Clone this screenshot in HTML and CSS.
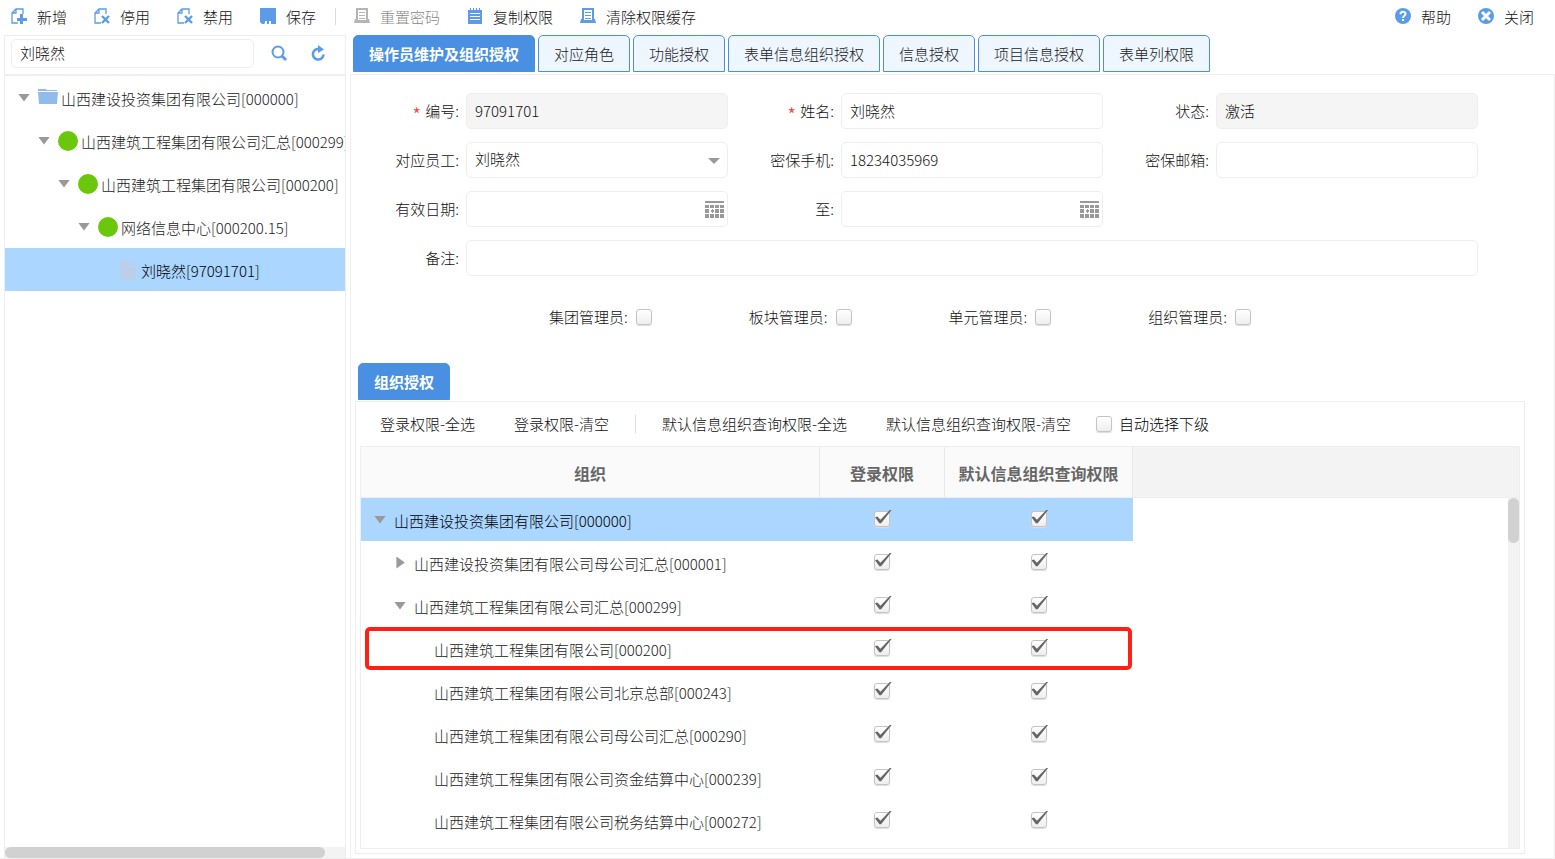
FILE: index.html
```html
<!DOCTYPE html>
<html lang="zh-CN">
<head>
<meta charset="utf-8">
<title>操作员维护及组织授权</title>
<link rel="stylesheet" href="styles.css">
</head>
<body>
<svg class="defs" aria-hidden="true">
  <symbol id="i-folder" viewBox="0 0 20 16"><path fill="#8fbcec" d="M0 1h8l1 1h10v1H0z"/><path fill="#8fbcec" d="M0 4h20l-1 12H1z"/></symbol>
  <symbol id="i-file" viewBox="0 0 16 20"><path fill="#bccfe8" d="M0 0h9v7h7v13H0z"/><path fill="#bccfe8" d="M10 0l6 6h-6z"/></symbol>
  <symbol id="i-print" viewBox="0 0 16 16"><path fill="none" stroke="currentColor" stroke-width="2" d="M3 12V1h10v11"/><path fill="currentColor" d="M5 4h6v1H5zM5 7h6v1H5zM5 10h6v1H5zM1 11h3v1h8v-1h3l1 4H0z"/></symbol>
  <symbol id="i-page" viewBox="0 0 16 16"><path fill="none" stroke="currentColor" stroke-width="1.3" d="M7 15H1V5l4-4h7v5M1 5h4V1"/></symbol>
  <symbol id="i-cal" viewBox="0 0 19 17"><path fill="#999" d="M0 0h19v2H0zM0 4h4v3H0zM5 4h4v3H5zM10 4h4v3h-4zM15 4h4v3h-4zM0 8h4v4H0zM6 9h1V8h1v1h1v2H8v1H7v-1H6zM10 8h4v4h-4zM15 8h4v4h-4zM0 13h4v4H0zM5 13h4v4H5zM10 13h4v4h-4zM15 13h4v4h-4z"/></symbol>
</svg>

<header class="toolbar">
  <button class="tool"><svg class="ico" viewBox="0 0 16 16"><use href="#i-page"/><path fill="currentColor" d="M9 6h3v4h4v3h-4v3H9v-3H6v-3h3z"/></svg>新增</button>
  <button class="tool"><svg class="ico" viewBox="0 0 16 16"><use href="#i-page"/><path stroke="currentColor" stroke-width="2.4" d="M8 8l7 7M15 8l-7 7"/></svg>停用</button>
  <button class="tool"><svg class="ico" viewBox="0 0 16 16"><use href="#i-page"/><path stroke="currentColor" stroke-width="2.4" d="M8 8l7 7M15 8l-7 7"/></svg>禁用</button>
  <button class="tool"><svg class="ico" viewBox="0 0 16 16"><path fill="currentColor" d="M0 0h16v16h-5v-3H9v3H7v-3H5v2l-1 1H2l-2-2z"/></svg>保存</button>
  <span class="tool-sep"></span>
  <button class="tool" disabled><svg class="ico" viewBox="0 0 16 16"><use href="#i-print"/></svg>重置密码</button>
  <button class="tool"><svg class="ico" viewBox="0 0 16 16"><path fill="currentColor" d="M1 2h14v14H1z"/><path stroke="currentColor" d="M3.500 0v3M6.500 0v3M9.500 0v3M12.500 0v3"/><path stroke="#fff" d="M3 5.500h10M3 8.500h10M3 11.500h10"/></svg>复制权限</button>
  <button class="tool"><svg class="ico" viewBox="0 0 16 16"><use href="#i-print"/></svg>清除权限缓存</button>
  <span class="spring"></span>
  <button class="tool"><svg class="ico" viewBox="0 0 16 16"><circle cx="8" cy="8" r="8" fill="currentColor"/><path fill="none" stroke="#fff" stroke-width="2" d="M5.500 6.200C5.500 3 10.500 3 10.500 6c0 1.800-2.500 1.700-2.500 4M8 11v2"/></svg>帮助</button>
  <button class="tool"><svg class="ico" viewBox="0 0 16 16"><circle cx="8" cy="8" r="8" fill="currentColor"/><path stroke="#fff" stroke-width="3" d="M4 4l8 8M12 4l-8 8"/></svg>关闭</button>
</header>

<div class="workspace">
  <aside class="sidebar">
    <div class="search">
      <input class="field search-input" type="text" value="刘晓然" aria-label="搜索">
      <button class="icon-btn" aria-label="查询"><svg class="ico" viewBox="0 0 16 16"><circle cx="7" cy="7" r="5.500" fill="none" stroke="currentColor" stroke-width="2"/><path stroke="currentColor" stroke-width="3" d="M11 11l4 4"/></svg></button>
      <button class="icon-btn" aria-label="刷新"><svg class="ico" viewBox="0 0 16 16"><path fill="none" stroke="currentColor" stroke-width="2.600" d="M13.500 9.500A5.300 5.300 0 1 1 9 4"/><path fill="currentColor" d="M8 0l6 4.500L8 8z"/></svg></button>
    </div>
    <ul class="tree">
      <li class="node lv0"><span class="caret"></span><svg class="node-ico folder"><use href="#i-folder"/></svg><span class="node-text">山西建设投资集团有限公司[000000]</span></li>
      <li class="node lv1"><span class="caret"></span><span class="node-ico dot"></span><span class="node-text">山西建筑工程集团有限公司汇总[000299]</span></li>
      <li class="node lv2"><span class="caret"></span><span class="node-ico dot"></span><span class="node-text">山西建筑工程集团有限公司[000200]</span></li>
      <li class="node lv3"><span class="caret"></span><span class="node-ico dot"></span><span class="node-text">网络信息中心[000200.15]</span></li>
      <li class="node lv4 selected"><span class="caret none"></span><svg class="node-ico file"><use href="#i-file"/></svg><span class="node-text">刘晓然[97091701]</span></li>
    </ul>
    <div class="hscroll"><div class="hthumb"></div></div>
  </aside>

  <main class="content">
    <nav class="tabs">
      <button class="tab active">操作员维护及组织授权</button>
      <button class="tab">对应角色</button>
      <button class="tab">功能授权</button>
      <button class="tab">表单信息组织授权</button>
      <button class="tab">信息授权</button>
      <button class="tab">项目信息授权</button>
      <button class="tab">表单列权限</button>
    </nav>
    <section class="pane">
      <form class="form">
        <label class="lbl" for="code"><span class="req">*</span>编号:</label>
        <input class="field" id="code" type="text" value="97091701" readonly>
        <label class="lbl" for="name"><span class="req">*</span>姓名:</label>
        <input class="field" id="name" type="text" value="刘晓然">
        <label class="lbl" for="state">状态:</label>
        <input class="field" id="state" type="text" value="激活" readonly>
        <label class="lbl" for="staff">对应员工:</label>
        <div class="wrap"><select class="field" id="staff"><option>刘晓然</option></select><span class="caret drop"></span></div>
        <label class="lbl" for="phone">密保手机:</label>
        <input class="field" id="phone" type="text" value="18234035969">
        <label class="lbl" for="mail">密保邮箱:</label>
        <input class="field" id="mail" type="text">
        <label class="lbl" for="from">有效日期:</label>
        <div class="wrap"><input class="field" id="from" type="text"><svg class="cal"><use href="#i-cal"/></svg></div>
        <label class="lbl" for="to">至:</label>
        <div class="wrap"><input class="field" id="to" type="text"><svg class="cal"><use href="#i-cal"/></svg></div>
        <label class="lbl row-start" for="note">备注:</label>
        <input class="field wide" id="note" type="text">
      </form>
      <div class="admins">
        <label class="admin">集团管理员:<input class="check" type="checkbox"></label>
        <label class="admin">板块管理员:<input class="check" type="checkbox"></label>
        <label class="admin">单元管理员:<input class="check" type="checkbox"></label>
        <label class="admin">组织管理员:<input class="check" type="checkbox"></label>
      </div>
      <nav class="subtabs"><button class="tab active">组织授权</button></nav>
      <section class="auth">
        <div class="auth-bar">
          <button class="link-btn">登录权限-全选</button>
          <button class="link-btn">登录权限-清空</button>
          <span class="bar-sep"></span>
          <button class="link-btn">默认信息组织查询权限-全选</button>
          <button class="link-btn">默认信息组织查询权限-清空</button>
          <label class="auto"><input class="check" type="checkbox">自动选择下级</label>
        </div>
        <div class="grid">
          <table class="orgs">
            <colgroup><col class="c-org"><col class="c-login"><col class="c-query"><col></colgroup>
            <thead><tr><th>组织</th><th>登录权限</th><th>默认信息组织查询权限</th><th class="filler"></th></tr></thead>
            <tbody>
              <tr class="current"><td class="org lv0"><span class="caret"></span><span class="org-text">山西建设投资集团有限公司[000000]</span></td><td><input class="check" type="checkbox" aria-label="登录权限" checked></td><td><input class="check" type="checkbox" aria-label="默认信息组织查询权限" checked></td><td></td></tr>
              <tr><td class="org lv1"><span class="caret closed"></span><span class="org-text">山西建设投资集团有限公司母公司汇总[000001]</span></td><td><input class="check" type="checkbox" aria-label="登录权限" checked></td><td><input class="check" type="checkbox" aria-label="默认信息组织查询权限" checked></td><td></td></tr>
              <tr><td class="org lv1"><span class="caret"></span><span class="org-text">山西建筑工程集团有限公司汇总[000299]</span></td><td><input class="check" type="checkbox" aria-label="登录权限" checked></td><td><input class="check" type="checkbox" aria-label="默认信息组织查询权限" checked></td><td></td></tr>
              <tr class="marked"><td class="org lv2"><span class="caret none"></span><span class="org-text">山西建筑工程集团有限公司[000200]</span></td><td><input class="check" type="checkbox" aria-label="登录权限" checked></td><td><input class="check" type="checkbox" aria-label="默认信息组织查询权限" checked></td><td></td></tr>
              <tr><td class="org lv2"><span class="caret none"></span><span class="org-text">山西建筑工程集团有限公司北京总部[000243]</span></td><td><input class="check" type="checkbox" aria-label="登录权限" checked></td><td><input class="check" type="checkbox" aria-label="默认信息组织查询权限" checked></td><td></td></tr>
              <tr><td class="org lv2"><span class="caret none"></span><span class="org-text">山西建筑工程集团有限公司母公司汇总[000290]</span></td><td><input class="check" type="checkbox" aria-label="登录权限" checked></td><td><input class="check" type="checkbox" aria-label="默认信息组织查询权限" checked></td><td></td></tr>
              <tr><td class="org lv2"><span class="caret none"></span><span class="org-text">山西建筑工程集团有限公司资金结算中心[000239]</span></td><td><input class="check" type="checkbox" aria-label="登录权限" checked></td><td><input class="check" type="checkbox" aria-label="默认信息组织查询权限" checked></td><td></td></tr>
              <tr><td class="org lv2"><span class="caret none"></span><span class="org-text">山西建筑工程集团有限公司税务结算中心[000272]</span></td><td><input class="check" type="checkbox" aria-label="登录权限" checked></td><td><input class="check" type="checkbox" aria-label="默认信息组织查询权限" checked></td><td></td></tr>
            </tbody>
          </table>
          <div class="vscroll"><div class="vthumb"></div></div>
        </div>
      </section>
    </section>
  </main>
</div>
</body>
</html>
```
FILE: styles.css
```css
*, ::before, ::after { box-sizing: border-box; }

body {
  margin: 0;
  height: 100vh;
  display: flex;
  flex-direction: column;
  overflow: hidden;
  background: #fff;
  color: #111;
  font: 300 15px/20px "Noto Sans CJK SC", sans-serif;
}

button, input, select { font: inherit; color: inherit; }
button { border: 0; padding: 0; background: none; white-space: nowrap; }
.defs { position: absolute; width: 0; height: 0; }
.ico { width: 16px; height: 16px; flex: none; color: #5c9ce6; overflow: visible; }

/* Top toolbar */
.toolbar { flex: none; height: 35px; padding: 0 21px 2px 11px; display: flex; align-items: center; gap: 27px; }
.tool { display: flex; align-items: flex-start; gap: 10px; padding-top: 1px; }
.tool .ico { margin-top: 1px; }
.tool:disabled { color: #888; }
.tool:disabled .ico { color: #b5b5b5; }
.tool-sep { width: 1px; height: 17px; margin: 0 -9px 0 -8px; background: #ddd; }
.spring { flex: 1; }

.workspace { flex: 1; min-height: 0; display: flex; gap: 4px; padding-left: 4px; border-bottom: 1px solid #eee; }

/* Sidebar */
.sidebar { width: 342px; flex: none; display: flex; flex-direction: column; border: 1px solid #eee; border-bottom: 0; }
.search { display: flex; align-items: center; height: 40px; padding: 0 13px 4px 6px; gap: 17px; border-bottom: 2px solid #eee; }
.search .search-input { flex: 1; height: 29px; min-width: 0; }
.icon-btn { width: 22px; height: 20px; display: flex; align-items: center; justify-content: flex-start; }
.tree { flex: 1; min-height: 0; margin: 0; padding: 0; list-style: none; overflow: hidden; color: #222; }
.node { display: flex; align-items: center; height: 43px; white-space: nowrap; }
.selected, .current td:not(:last-child) { background: #abd6ff; color: #000; }
.caret { flex: none; width: 12px; height: 8px; margin-right: 8px; background: #999; clip-path: polygon(0 0, 100% 0, 50% 100%); }
.caret.closed { height: 12px; clip-path: polygon(20% 0, 90% 50%, 20% 100%); }
.caret.none { background: none; }
.node-ico { flex: none; width: 20px; height: 20px; margin-right: 3px; }
.folder { height: 16px; margin-bottom: 4px; }
.dot { border-radius: 50%; background: #6ac70c; }
.node-text, .org-text { padding-top: 2px; }
.lv0 { padding-left: 13px; }
.lv1 { padding-left: 33px; }
.lv2 { padding-left: 53px; }
.lv3 { padding-left: 73px; }
.lv4 { padding-left: 93px; }
.hscroll { height: 11px; background: #f3f3f3; }
.hthumb { width: 94%; height: 11px; border-radius: 6px; background: #d1d1d1; }

/* Tabs */
.content { flex: 1; min-width: 0; display: flex; flex-direction: column; }
.tabs { display: flex; gap: 3px; padding: 0 0 2px 3px; }
.tab { height: 37px; padding: 0 15px; border: 1px solid #4990e2; border-radius: 5px 5px 0 0; background: #eef6ff; color: #222; }
.tab.active { background: #4990e2; color: #fff; font-weight: 700; }

/* Operator form */
.pane { flex: 1; min-height: 0; display: flex; flex-direction: column; border: 1px solid #eee; border-bottom: 0; }
.form { display: grid; grid-template-columns: repeat(3, 107px 1fr); gap: 13px 0; margin: 18px 76px 0 2px; }
.form > .field, .wrap { margin-left: 6px; }
.form > :nth-child(even) { min-width: 0; }
.lbl { display: flex; justify-content: flex-end; align-items: center; align-self: center; padding-right: 1px; }
.row-start { grid-column: 1; }
.wide { grid-column: 2 / -1; }
.req { height: 12px; margin-right: 4px; color: #f33; font-size: 20px; }
.field { height: 36px; min-width: 0; padding: 0 8px 2px; border: 1px solid #eee; border-radius: 5px; background: #fff; outline: 0; appearance: none; }
.field:read-only:not(select) { background: #f5f5f5; }
.wrap { position: relative; display: grid; }
.drop { position: absolute; right: 8px; top: 16px; height: 6px; margin: 0; }
.cal { position: absolute; right: 4px; top: 10px; width: 19px; height: 17px; }
.admins { display: flex; gap: 97px; padding: 31px 0 0 198px; }
.admin, .auto { display: flex; align-items: center; gap: 8px; }

/* Checkboxes */
.check { position: relative; flex: none; width: 16px; height: 16px; margin: 0; border: 1px solid #c4c4c4; border-radius: 3px; background: linear-gradient(#fff, #eee); box-shadow: 0 1px 1px #ddd; appearance: none; }
.check:checked::after { content: ""; position: absolute; left: 0; top: -2px; width: 17px; height: 15px; background: #666; clip-path: polygon(0 52%, 14% 46%, 32% 68%, 90% 0, 100% 0, 36% 92%, 26% 92%); }

/* Organisation rights */
.subtabs { display: flex; padding: 36px 0 1px 7px; }
.auth { flex: 1; min-height: 0; display: flex; flex-direction: column; margin: 0 29px 4px 4px; border: 1px solid #eee; }
.auth-bar { flex: none; display: flex; align-items: center; height: 44px; padding: 0 24px; gap: 39px; }
.bar-sep { width: 1px; height: 18px; margin: 0 -13px; background: #ddd; }
.auto { margin-left: -14px; gap: 7px; color: #000; }
.grid { position: relative; flex: 1; min-height: 0; margin: 0 4px 4px; border: 1px solid #eee; overflow: hidden; }
.orgs { width: 100%; table-layout: fixed; border-collapse: separate; border-spacing: 0; color: #222; }
.c-org { width: 459px; }
.c-login { width: 125px; }
.c-query { width: 188px; }
.orgs th { height: 51px; padding: 2px 0 0; border-right: 1px solid #e8e8e8; border-bottom: 1px solid #eee; background: #fafafa; color: #666; font-size: 16px; font-weight: 700; }
.orgs .filler { border-right: 0; background: #f3f3f3; }
.orgs td { height: 43px; padding: 0 1px 2px 0; text-align: center; line-height: 0; }
.orgs .check { vertical-align: middle; }
.orgs .org { display: flex; align-items: center; padding: 0; line-height: 20px; white-space: nowrap; }
.orgs .lv0 { padding-left: 13px; }
.orgs .lv1 { padding-left: 33px; }
.orgs .lv2 { padding-left: 53px; }
.marked { position: relative; }
.marked .org::after { content: ""; position: absolute; left: 4px; top: 0; width: 767px; height: 43px; border: 4px solid #ff2015; border-radius: 5px; pointer-events: none; }
.vscroll { position: absolute; top: 51px; right: 0; bottom: 0; width: 11px; background: #f3f3f3; }
.vthumb { height: 45px; border-radius: 6px; background: #d1d1d1; }
```
